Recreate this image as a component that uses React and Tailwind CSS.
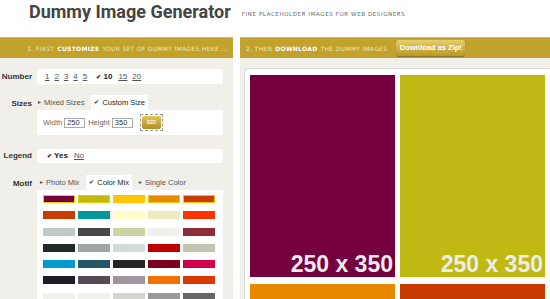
const swatchRows = [
  ["#74003f", "#c0b914", "#ffc800", "#e88a00", "#c83c00"],
  ["#c83c00", "#009999", "#fffcc6", "#efebbd", "#ff3300"],
  ["#bfcbc6", "#474747", "#cfd3a1", "#f2f1ec", "#8e2c3c"],
  ["#222a28", "#a0a6a5", "#d3dbd8", "#c00000", "#c2c4b3"],
  ["#0099cc", "#225866", "#222625", "#7a0020", "#d0004a"],
  ["#221a26", "#584b56", "#a0959f", "#f07000", "#d93a00"],
  ["#f2f1ec", "#f2f1ec", "#d6d6d0", "#9a9a9a", "#666666"],
];

const tiles = ["#74003f", "#c0b914", "#e88a00", "#c83c00"];

function Label({ children }) {
  return <div className="w-[33px] shrink-0 pr-[1px] text-right text-[8px] font-bold text-[#333]">{children}</div>;
}

function Tab({ active, children }) {
  return (
    <div className={`flex h-[15px] items-center px-[3px] text-[7.5px] ${active ? "bg-white text-[#222]" : "text-[#555]"}`}>
      <span className="mr-[3px] text-[6px]">{active ? "✔" : "▸"}</span>
      {children}
    </div>
  );
}

export default function App() {
  return (
    <div className="h-[299px] w-[550px] overflow-hidden bg-white" style={{ fontFamily: "'Liberation Sans', Arial, sans-serif" }}>
      {/* header */}
      <div className="flex h-[37px] items-start">
        <h1 className="ml-[29px] mt-[2px] text-[18px] font-bold leading-[20px] text-[#444]" style={{ fontFamily: "Roboto, sans-serif" }}>
          Dummy Image Generator
        </h1>
        <p className="ml-[11px] mt-[10px] text-[5.5px] tracking-[0.6px] text-[#666]" style={{ fontFamily: "'DejaVu Sans', sans-serif" }}>
          FINE PLACEHOLDER IMAGES FOR WEB DESIGNERS
        </p>
      </div>

      <div className="flex gap-[7px]">
        {/* left column */}
        <div className="w-[233px] shrink-0">
          <div className="flex h-[21px] items-center justify-end border-t border-[#d6be5c] bg-[#c1a22c] pr-[5px] text-[6px] tracking-[0.3px] text-[#f3e7b4]" style={{ fontFamily: "'DejaVu Sans', sans-serif" }}>
            1. FIRST <b className="mx-[3px] text-white">CUSTOMIZE</b> YOUR SET OF DUMMY IMAGES HERE ...
          </div>
          <div className="h-[241px] bg-[#f0efea] pr-[10px] pt-[11px]">
            {/* number */}
            <div className="flex items-center gap-[4px]">
              <Label>Number</Label>
              <div className="flex h-[15px] flex-1 items-center gap-[5px] rounded-[2px] bg-white pl-[8px] text-[8px] text-[#555]">
                {["1", "2", "3", "4", "5"].map((n) => (
                  <span key={n} className="underline">{n}</span>
                ))}
                <span className="ml-[4px] font-bold text-[#222]"><span className="text-[6px]">✔</span> 10</span>
                <span className="ml-[1px] underline">15</span>
                <span className="underline">20</span>
              </div>
            </div>

            {/* sizes */}
            <div className="mt-[11px] flex gap-[2px]">
              <Label><div className="mt-[3px]">Sizes</div></Label>
              <div className="flex-1">
                <div className="flex">
                  <Tab>Mixed Sizes</Tab>
                  <div className="ml-[4px]"><Tab active>Custom Size</Tab></div>
                </div>
                <div className="ml-[2px] flex h-[25px] items-center bg-white pl-[6px] text-[7.5px] text-[#666]">
                  Width
                  <span className="ml-[2px] flex h-[10px] w-[21px] items-center border border-[#aaa] pl-[2px] text-[#333]">250</span>
                  <span className="ml-[3px]">Height</span>
                  <span className="ml-[2px] flex h-[10px] w-[21px] items-center border border-[#aaa] pl-[2px] text-[#333]">350</span>
                  <span className="ml-[7px] flex h-[17px] w-[23px] items-center justify-center border border-dashed border-[#999] p-[1px]">
                    <span className="flex h-full w-full items-center justify-center rounded-[2px] bg-gradient-to-b from-[#e2c75a] to-[#b08f22] text-[5px] font-bold text-white">GO!</span>
                  </span>
                </div>
              </div>
            </div>

            {/* legend */}
            <div className="mt-[14px] flex items-center gap-[4px]">
              <Label>Legend</Label>
              <div className="flex h-[14px] flex-1 items-center gap-[6px] bg-white pl-[10px] text-[8px]">
                <span className="font-bold text-[#222]"><span className="text-[6px]">✔</span> Yes</span>
                <span className="text-[#555] underline">No</span>
              </div>
            </div>

            {/* motif */}
            <div className="mt-[12px] flex gap-[4px]">
              <Label><div className="mt-[3px]">Motif</div></Label>
              <div className="flex-1">
                <div className="flex">
                  <Tab>Photo Mix</Tab>
                  <div className="ml-[4px]"><Tab active>Color Mix</Tab></div>
                  <div className="ml-[4px]"><Tab>Single Color</Tab></div>
                </div>
                <div className="flex flex-col gap-y-[8.3px] bg-white pl-[6px] pt-[5px] pb-[10px]">
                  {swatchRows.map((row, i) => (
                    <div key={i} className="flex gap-[3px]">
                      {row.map((c, j) => (
                        <div
                          key={j}
                          className={`h-[8px] w-[32px] ${i === 0 ? "border border-[#f7c600]" : ""}`}
                          style={{ backgroundColor: c }}
                        />
                      ))}
                    </div>
                  ))}
                </div>
              </div>
            </div>
          </div>
        </div>

        {/* right column */}
        <div className="flex-1">
          <div className="flex h-[21px] items-center border-t border-[#d6be5c] bg-[#c1a22c] pl-[6px] text-[6px] tracking-[0.3px] text-[#f3e7b4]" style={{ fontFamily: "'DejaVu Sans', sans-serif" }}>
            2. THEN <b className="mx-[3px] text-white">DOWNLOAD</b> THE DUMMY IMAGES
            <span className="ml-[9px] flex h-[16px] w-[69px] items-center justify-center rounded-[3px] bg-gradient-to-b from-[#e6cf6c] to-[#b99824] text-[7.5px] font-bold tracking-normal text-white shadow-[0_1px_1px_rgba(0,0,0,0.3)]" style={{ fontFamily: "'Liberation Sans', sans-serif" }}>
              Download as Zip!
            </span>
          </div>
          <div className="h-[241px] bg-[#f0efea] pl-[4px] pt-[10px]">
            <div className="h-full rounded-tl-[4px] border-l border-t border-[#dcdbd5] bg-white pl-[5px] pt-[6px]">
              <div className="grid w-[295px] grid-cols-2 gap-x-[5px] gap-y-[7px]">
                {tiles.map((c, i) => (
                  <div key={i} className="flex h-[202px] w-[145px] items-end justify-end pb-[1px] pr-[2px]" style={{ backgroundColor: c }}>
                    {i < 2 && (
                      <span className="text-[23px] font-bold leading-[24px] text-[#ececec]">
                        250 x 350
                      </span>
                    )}
                  </div>
                ))}
              </div>
            </div>
          </div>
        </div>
      </div>
    </div>
  );
}
